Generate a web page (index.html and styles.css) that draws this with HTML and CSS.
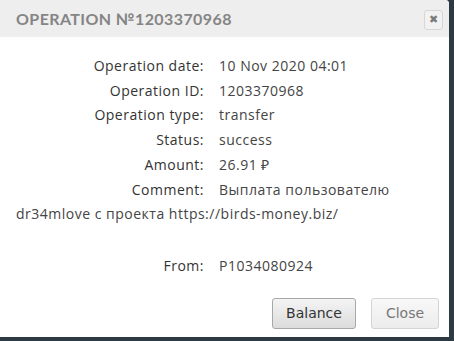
FILE: index.html
```html
<!DOCTYPE html>
<html lang="en">
<head>
    <meta charset="UTF-8">
    <title>Operation</title>
    <link rel="stylesheet" href="styles.css">
</head>
<body>
    <div class="dialog">
        <div class="dialog-header">
            <span class="dialog-title">Operation №1203370968</span>
            <button class="dialog-close" title="Close">&#10006;</button>
        </div>
        <div class="dialog-body">
            <div class="row"><span class="label">Operation date:</span><span class="value">10 Nov 2020 04:01</span></div>
            <div class="row"><span class="label">Operation ID:</span><span class="value">1203370968</span></div>
            <div class="row"><span class="label">Operation type:</span><span class="value">transfer</span></div>
            <div class="row"><span class="label">Status:</span><span class="value">success</span></div>
            <div class="row"><span class="label">Amount:</span><span class="value">26.91 &#8381;</span></div>
            <div class="row"><span class="label">Comment:</span><span class="value">Выплата пользователю dr34mlove с проекта https://birds-money.biz/</span></div>
            <div class="row row-gap"><span class="label">From:</span><span class="value">P1034080924</span></div>
        </div>
        <div class="dialog-buttons">
            <button class="btn btn-main">Balance</button>
            <button class="btn btn-light">Close</button>
        </div>
    </div>
</body>
</html>
```

FILE: styles.css
```css
body {
    margin: 0;
    background-color: #2d3a44;
    height: 341px;
    overflow: hidden;
}
.dialog {
    width: 449px;
    height: 337px;
    background-color: #fff;
    border-top-right-radius: 4px;
    display: flex;
    flex-direction: column;
}
.dialog-header {
    height: 37px;
    background-color: #eeeeee;
    display: flex;
    align-items: center;
    justify-content: space-between;
    padding: 0 6px 0 16px;
    border-top-right-radius: 4px;
}
.dialog-title {
    font-family: "Lato", sans-serif;
    font-size: 16px;
    font-weight: bold;
    letter-spacing: 0.4px;
    text-transform: uppercase;
    color: #858585;
}
.dialog-close {
    width: 19px;
    height: 20px;
    padding: 0;
    margin-top: 2px;
    border: 1px solid #d6d6d6;
    border-radius: 3px;
    background-color: #f2f2f2;
    color: #7a7a7a;
    font-size: 11px;
    font-weight: bold;
    line-height: 18px;
    font-family: "DejaVu Sans", sans-serif;
    cursor: pointer;
}
.dialog-body {
    padding: 17px 16px 0 16px;
    font-family: "Open Sans", sans-serif;
    font-size: 14px;
    letter-spacing: 0.5px;
    line-height: 24.7px;
    color: #333;
}
.label {
    display: inline-block;
    width: 188px;
    text-align: right;
    margin-right: 15px;
}
.value {
    color: #444;
}
.row-gap {
    margin-top: 27px;
}
.dialog-buttons {
    display: flex;
    justify-content: flex-end;
    gap: 15px;
    padding: 19px 10px 0 0;
}
.btn {
    height: 31px;
    padding: 0 10px;
    font-family: "DejaVu Sans", sans-serif;
    font-size: 14px;
    border-radius: 3px;
    cursor: pointer;
}
.btn-main {
    width: 84px;
    color: #333;
    border: 1px solid #a8a8a8;
    background: linear-gradient(#f4f4f4, #dcdcdc);
}
.btn-light {
    width: 68px;
    color: #777;
    border: 1px solid #d4d4d4;
    background: linear-gradient(#f8f8f8, #ececec);
}
```
